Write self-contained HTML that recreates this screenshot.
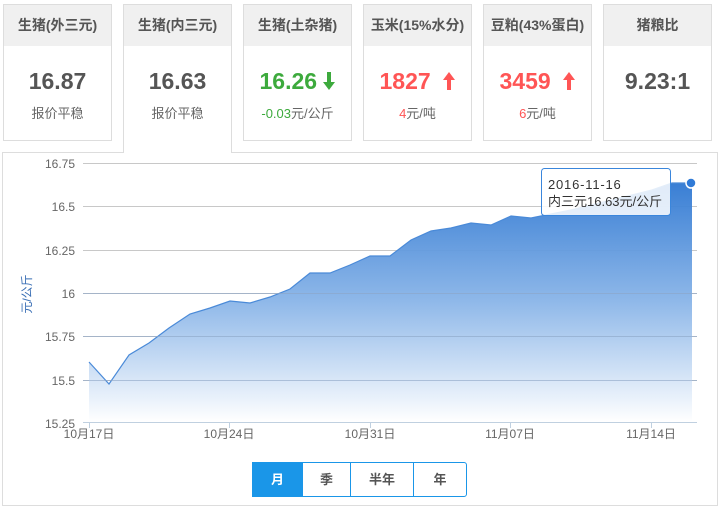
<!DOCTYPE html>
<html><head><meta charset="utf-8"><style>
*{margin:0;padding:0;box-sizing:border-box}
body{width:724px;height:512px;background:#fff;font-family:"Liberation Sans","Noto Sans CJK SC",sans-serif;position:relative;overflow:hidden}
.card{position:absolute;top:4px;width:109px;height:137px;border:1px solid #ddd;background:#fff;text-align:center}
.card .h{height:41px;background:#f0f0f0;font-size:14px;font-weight:bold;color:#555;line-height:41px}
.card .v{margin-top:21px;font-size:23px;font-weight:bold;color:#555;line-height:28px;height:28px}
.card .s{margin-top:8px;font-size:13px;color:#666}
.act{height:149px;border-bottom:none;z-index:2}
.panel{position:absolute;left:2px;top:152px;width:716px;height:354px;border:1px solid #ddd}
.btns{position:absolute;left:252px;top:462px;height:35px;display:flex;border:1px solid #1a96e8;border-radius:0 3px 3px 0;z-index:3}
.btns div{height:33px;line-height:33px;text-align:center;font-size:13px;font-weight:bold;color:#555;border-left:1px solid #1a96e8}
.btns div:first-child{border-left:none;background:#1a96e8;color:#fff}
</style></head><body>
<div class="card" style="left:3px"><div class="h">生猪(外三元)</div><div class="v">16.87</div><div class="s">报价平稳</div></div>
<div class="card act" style="left:123px"><div class="h">生猪(内三元)</div><div class="v">16.63</div><div class="s">报价平稳</div></div>
<div class="card" style="left:243px"><div class="h">生猪(土杂猪)</div><div class="v" style="color:#3daa3d">16.26 <svg width="12" height="18" viewBox="0 0 12 18" style="vertical-align:-1px"><path d="M4 0h4v10h4l-6 8-6-8h4z" fill="#3daa3d"/></svg></div><div class="s" style="color:#3daa3d">-0.03<span style="color:#666">元/公斤</span></div></div>
<div class="card" style="left:363px"><div class="h">玉米(15%水分)</div><div class="v" style="color:#f55">1827 &nbsp;<svg width="12" height="18" viewBox="0 0 12 18" style="vertical-align:-1px"><path d="M4 18h4v-10h4l-6-8-6 8h4z" fill="#f55"/></svg></div><div class="s"><span style="color:#f55">4</span>元/吨</div></div>
<div class="card" style="left:483px"><div class="h">豆粕(43%蛋白)</div><div class="v" style="color:#f55">3459 &nbsp;<svg width="12" height="18" viewBox="0 0 12 18" style="vertical-align:-1px"><path d="M4 18h4v-10h4l-6-8-6 8h4z" fill="#f55"/></svg></div><div class="s"><span style="color:#f55">6</span>元/吨</div></div>
<div class="card" style="left:603px"><div class="h">猪粮比</div><div class="v">9.23:1</div></div>
<div class="panel"></div>
<svg width="724" height="512" style="position:absolute;left:0;top:0;z-index:1" font-family="Liberation Sans, Noto Sans CJK SC, sans-serif">
<defs><linearGradient id="g" x1="0" y1="0" x2="0" y2="1"><stop offset="0" stop-color="#2f78d2"/><stop offset="0.5" stop-color="#8ab5e8"/><stop offset="1" stop-color="#ffffff"/></linearGradient></defs>
<g stroke="#c8c8c8" stroke-width="1">
<line x1="83" y1="163.5" x2="697" y2="163.5"/><line x1="83" y1="206.5" x2="697" y2="206.5"/><line x1="83" y1="250.5" x2="697" y2="250.5"/><line x1="83" y1="293.5" x2="697" y2="293.5"/><line x1="83" y1="336.5" x2="697" y2="336.5"/><line x1="83" y1="380.5" x2="697" y2="380.5"/>
</g>
<polygon fill="url(#g)" opacity="0.95" points="89,422 89,362 109,384 129,355 149,343 169,328 190,314 210,308 230,301 250,303 270,297 290,289 310,273 330,273 350,265 370,256 390,256 411,240 431,231 451,228 471,223 491,225 511,216 531,218 551,214 571,210 591,205 612,200 632,195 652,190 672,183 692,183 692,422"/>
<polyline fill="none" stroke="#4a8ad8" stroke-width="1.2" points="89,362 109,384 129,355 149,343 169,328 190,314 210,308 230,301 250,303 270,297 290,289 310,273 330,273 350,265 370,256 390,256 411,240 431,231 451,228 471,223 491,225 511,216 531,218 551,214 571,210 591,205 612,200 632,195 652,190 672,183 692,183"/>
<g stroke="#8fa8c8" stroke-width="1" opacity="0.6"><line x1="83" y1="293.5" x2="697" y2="293.5"/><line x1="83" y1="336.5" x2="697" y2="336.5"/><line x1="83" y1="380.5" x2="697" y2="380.5"/></g>
<line x1="83" y1="422.5" x2="697" y2="422.5" stroke="#c0d0e0"/>
<g stroke="#c0d0e0"><line x1="89.5" y1="422" x2="89.5" y2="428"/><line x1="229.5" y1="422" x2="229.5" y2="428"/><line x1="370.5" y1="422" x2="370.5" y2="428"/><line x1="510.5" y1="422" x2="510.5" y2="428"/><line x1="651.5" y1="422" x2="651.5" y2="428"/></g>
<g font-size="12" fill="#666" text-anchor="end">
<text x="75" y="168">16.75</text><text x="75" y="211">16.5</text><text x="75" y="255">16.25</text><text x="75" y="298">16</text><text x="75" y="341">15.75</text><text x="75" y="385">15.5</text><text x="75" y="428">15.25</text>
</g>
<g font-size="12" fill="#666" text-anchor="middle">
<text x="89" y="438">10月17日</text><text x="229" y="438">10月24日</text><text x="370" y="438">10月31日</text><text x="510" y="438">11月07日</text><text x="651" y="438">11月14日</text>
</g>
<text transform="translate(31,294) rotate(-90)" font-size="12" fill="#3a6fb5" text-anchor="middle">元/公斤</text>
<circle cx="691" cy="183" r="5" fill="#2f7ad6" stroke="#fff" stroke-width="1.5"/>
<rect x="541.5" y="168.5" width="129" height="47" rx="3" fill="#fff" fill-opacity="0.85" stroke="#3a86dc"/>
<text x="548" y="189" font-size="13" letter-spacing="0.8" fill="#333">2016-11-16</text>
<text x="548" y="206" font-size="13" fill="#333">内三元16.63元/公斤</text>
</svg>
<div class="btns"><div style="width:49px">月</div><div style="width:48px">季</div><div style="width:63px">半年</div><div style="width:53px">年</div></div>
</body></html>
